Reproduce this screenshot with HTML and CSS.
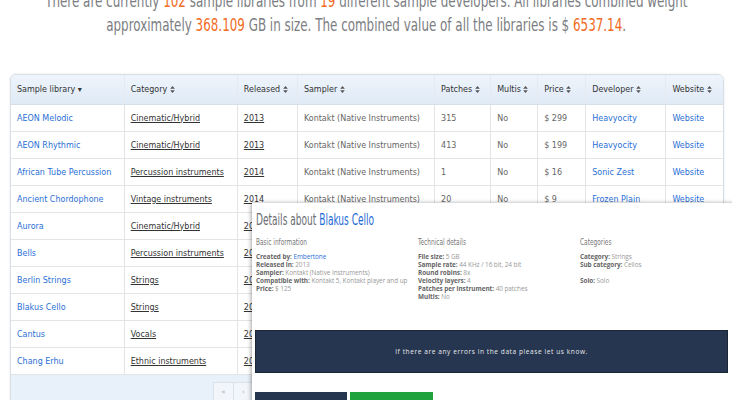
FILE: index.html
```html
<!DOCTYPE html>
<html>
<head>
<meta charset="utf-8">
<link rel="stylesheet" href="styles.css">
</head>
<body>
<div class="page">
  <div class="headline">
    <span class="hl-line">There are currently <span class="num">102</span> sample libraries from <span class="num">19</span> different sample developers. All libraries combined weight</span>
    <span class="hl-line">approximately <span class="num">368.109</span> GB in size. The combined value of all the libraries is $ <span class="num">6537.14</span>.</span>
  </div>

  <div class="tablewrap">
    <table class="libs">
      <colgroup>
        <col class="c1"><col class="c2"><col class="c3"><col class="c4"><col class="c5"><col class="c6"><col class="c7"><col class="c8"><col class="c9">
      </colgroup>
      <thead>
        <tr>
          <th>Sample library <span class="caret">&#9662;</span></th>
          <th>Category <svg class="sort" viewBox="0 0 6 9"><path d="M3 0L6 3.5H0Z M3 9L0 5.5H6Z"/></svg></th>
          <th>Released <svg class="sort" viewBox="0 0 6 9"><path d="M3 0L6 3.5H0Z M3 9L0 5.5H6Z"/></svg></th>
          <th>Sampler <svg class="sort" viewBox="0 0 6 9"><path d="M3 0L6 3.5H0Z M3 9L0 5.5H6Z"/></svg></th>
          <th>Patches <svg class="sort" viewBox="0 0 6 9"><path d="M3 0L6 3.5H0Z M3 9L0 5.5H6Z"/></svg></th>
          <th>Multis <svg class="sort" viewBox="0 0 6 9"><path d="M3 0L6 3.5H0Z M3 9L0 5.5H6Z"/></svg></th>
          <th>Price <svg class="sort" viewBox="0 0 6 9"><path d="M3 0L6 3.5H0Z M3 9L0 5.5H6Z"/></svg></th>
          <th>Developer <svg class="sort" viewBox="0 0 6 9"><path d="M3 0L6 3.5H0Z M3 9L0 5.5H6Z"/></svg></th>
          <th>Website <svg class="sort" viewBox="0 0 6 9"><path d="M3 0L6 3.5H0Z M3 9L0 5.5H6Z"/></svg></th>
        </tr>
      </thead>
      <tbody>
        <tr><td><a class="lnk">AEON Melodic</a></td><td><a class="ul">Cinematic/Hybrid</a></td><td><a class="ul">2013</a></td><td class="mut">Kontakt (Native Instruments)</td><td class="mut">315</td><td class="mut">No</td><td class="mut">$ 299</td><td><a class="lnk">Heavyocity</a></td><td><a class="lnk">Website</a></td></tr>
        <tr><td><a class="lnk">AEON Rhythmic</a></td><td><a class="ul">Cinematic/Hybrid</a></td><td><a class="ul">2013</a></td><td class="mut">Kontakt (Native Instruments)</td><td class="mut">413</td><td class="mut">No</td><td class="mut">$ 199</td><td><a class="lnk">Heavyocity</a></td><td><a class="lnk">Website</a></td></tr>
        <tr><td><a class="lnk">African Tube Percussion</a></td><td><a class="ul">Percussion instruments</a></td><td><a class="ul">2014</a></td><td class="mut">Kontakt (Native Instruments)</td><td class="mut">1</td><td class="mut">No</td><td class="mut">$ 16</td><td><a class="lnk">Sonic Zest</a></td><td><a class="lnk">Website</a></td></tr>
        <tr><td><a class="lnk">Ancient Chordophone</a></td><td><a class="ul">Vintage instruments</a></td><td><a class="ul">2014</a></td><td class="mut">Kontakt (Native Instruments)</td><td class="mut">20</td><td class="mut">No</td><td class="mut">$ 9</td><td><a class="lnk">Frozen Plain</a></td><td><a class="lnk">Website</a></td></tr>
        <tr><td><a class="lnk">Aurora</a></td><td><a class="ul">Cinematic/Hybrid</a></td><td><a class="ul">2014</a></td><td class="mut">Kontakt (Native Instruments)</td><td class="mut">12</td><td class="mut">No</td><td class="mut">$ 49</td><td><a class="lnk">Frozen Plain</a></td><td><a class="lnk">Website</a></td></tr>
        <tr><td><a class="lnk">Bells</a></td><td><a class="ul">Percussion instruments</a></td><td><a class="ul">2013</a></td><td class="mut">Kontakt (Native Instruments)</td><td class="mut">6</td><td class="mut">No</td><td class="mut">$ 29</td><td><a class="lnk">Soundiron</a></td><td><a class="lnk">Website</a></td></tr>
        <tr><td><a class="lnk">Berlin Strings</a></td><td><a class="ul">Strings</a></td><td><a class="ul">2014</a></td><td class="mut">Kontakt (Native Instruments)</td><td class="mut">100</td><td class="mut">No</td><td class="mut">$ 749</td><td><a class="lnk">Orchestral Tools</a></td><td><a class="lnk">Website</a></td></tr>
        <tr><td><a class="lnk">Blakus Cello</a></td><td><a class="ul">Strings</a></td><td><a class="ul">2013</a></td><td class="mut">Kontakt (Native Instruments)</td><td class="mut">40</td><td class="mut">No</td><td class="mut">$ 125</td><td><a class="lnk">Embertone</a></td><td><a class="lnk">Website</a></td></tr>
        <tr><td><a class="lnk">Cantus</a></td><td><a class="ul">Vocals</a></td><td><a class="ul">2013</a></td><td class="mut">Kontakt (Native Instruments)</td><td class="mut">30</td><td class="mut">No</td><td class="mut">$ 299</td><td><a class="lnk">Soundiron</a></td><td><a class="lnk">Website</a></td></tr>
        <tr><td><a class="lnk">Chang Erhu</a></td><td><a class="ul">Ethnic instruments</a></td><td><a class="ul">2014</a></td><td class="mut">Kontakt (Native Instruments)</td><td class="mut">8</td><td class="mut">No</td><td class="mut">$ 39</td><td><a class="lnk">Frozen Plain</a></td><td><a class="lnk">Website</a></td></tr>
      </tbody>
    </table>
    <div class="tfoot">
      <div class="pager">
        <span class="pg">&laquo;</span><span class="pg">&lsaquo;</span><span class="pg">1</span><span class="pg">2</span><span class="pg">3</span>
      </div>
    </div>
  </div>

  <div class="details">
    <h2 class="dtitle"><span class="cond">Details about <span class="dname">Blakus Cello</span></span></h2>
    <div class="dcols">
      <div class="dcol">
        <h3 class="dhead"><span class="cond">Basic information</span></h3>
        <p class="dline"><b>Created by:</b> <span class="dlink">Embertone</span></p>
        <p class="dline"><b>Released in:</b> 2013</p>
        <p class="dline"><b>Sampler:</b> Kontakt (Native Instruments)</p>
        <p class="dline"><b>Compatible with:</b> Kontakt 5, Kontakt player and up</p>
        <p class="dline"><b>Price:</b> $ 125</p>
      </div>
      <div class="dcol">
        <h3 class="dhead"><span class="cond">Technical details</span></h3>
        <p class="dline"><b>File size:</b> 5 GB</p>
        <p class="dline"><b>Sample rate:</b> 44 KHz / 16 bit, 24 bit</p>
        <p class="dline"><b>Round robins:</b> 8x</p>
        <p class="dline"><b>Velocity layers:</b> 4</p>
        <p class="dline"><b>Patches per instrument:</b> 40 patches</p>
        <p class="dline"><b>Multis:</b> No</p>
      </div>
      <div class="dcol">
        <h3 class="dhead"><span class="cond">Categories</span></h3>
        <p class="dline"><b>Category:</b> Strings</p>
        <p class="dline"><b>Sub category:</b> Cellos</p>
        <p class="dline blank">&nbsp;</p>
        <p class="dline"><b>Solo:</b> Solo</p>
      </div>
    </div>
    <div class="notice">If there are any errors in the data please let us know.</div>
    <div class="btns">
      <span class="btn dark">Report error</span><span class="btn green">Visit website</span>
    </div>
  </div>
</div>
</body>
</html>
```
FILE: styles.css
```css
html, body { margin: 0; padding: 0; background: #fff; }
body { width: 732px; height: 400px; overflow: hidden; }
.page { position: relative; display: flow-root; }

.headline {
  margin: -11px 0 0;
  display: flex;
  flex-direction: column;
  align-items: center;
  font-family: "DejaVu Sans Condensed", "DejaVu Sans", sans-serif;
  font-stretch: condensed;
  font-size: 18px;
  line-height: 24px;
  color: #7b7d82;
}
.hl-line {
  display: block;
  white-space: nowrap;
  transform: scaleX(0.736);
  transform-origin: 50% 50%;
}
.num { color: #f26a24; }

.tablewrap {
  margin: 37px 8px 0 10px;
  border: 1px solid #d8dee6;
  border-radius: 5px 6px 0 0;
  overflow: hidden;
  box-shadow: 0 0 3px rgba(0,0,0,0.08);
}
.libs {
  width: 714px;
  table-layout: fixed;
  border-collapse: collapse;
  font-family: "DejaVu Sans", sans-serif;
  font-size: 8px;
}
.c1 { width: 113px; } .c2 { width: 113px; } .c3 { width: 60px; } .c4 { width: 137px; }
.c5 { width: 56px; } .c6 { width: 47px; } .c7 { width: 48px; } .c8 { width: 80px; } .c9 { width: 59px; }

.libs th {
  height: 29px;
  padding: 0 6px;
  text-align: left;
  font-weight: normal;
  color: #333;
  background: linear-gradient(#eef4fb, #dfeaf6);
  border-right: 1px solid #e6e9ed;
  border-bottom: 1px solid #d9dfe6;
  white-space: nowrap;
}
.libs td {
  height: 26px;
  padding: 0 6px;
  border-right: 1px solid #e4e4e4;
  border-bottom: 1px solid #e4e4e4;
  white-space: nowrap;
  overflow: hidden;
}
.libs th:last-child, .libs td:last-child { border-right: none; }
.caret { font-size: 8px; }
.sort { width: 5px; height: 7px; fill: #555; vertical-align: -1px; }
.lnk { color: #2a6fd6; }
.ul { color: #333; text-decoration: underline; }
.mut { color: #666; }

.tfoot {
  height: 30px;
  background: #e8f0fa;
}
.pager { display: flex; padding: 7px 0 0 202px; }
.pg {
  width: 19px; height: 18px;
  border: 1px solid #dbe2ea;
  background: #f2f6fb;
  color: #aaa;
  font-family: "DejaVu Sans", sans-serif;
  font-size: 7px;
  display: flex; align-items: center; justify-content: center;
  margin-right: -1px;
}

.details {
  position: absolute;
  left: 252px;
  top: 203px;
  width: 500px;
  height: 220px;
  background: #fff;
  box-shadow: -1px 0 4px rgba(0,0,0,0.35);
  padding: 0 0 0 3px;
  box-sizing: border-box;
}
.cond { display: inline-block; white-space: nowrap; transform-origin: 0 50%; }
.dtitle {
  margin: 7px 0 0 1px;
  font-family: "DejaVu Sans Condensed", "DejaVu Sans", sans-serif;
  font-stretch: condensed;
  font-weight: normal;
  font-size: 15px;
  line-height: 20px;
  color: #6c6e72;
}
.dtitle .cond { transform: scaleX(0.67); }
.dname { color: #1e6ad6; }
.dcols { display: grid; grid-template-columns: 162px 162px 162px; margin-top: 6px; }
.dhead {
  margin: 0 0 5px 1px;
  font-family: "DejaVu Sans Condensed", "DejaVu Sans", sans-serif;
  font-stretch: condensed;
  font-weight: normal;
  font-size: 9px;
  line-height: 12px;
  color: #777;
}
.dhead .cond { transform: scaleX(0.72); }
.dline {
  margin: 0 0 0 1px;
  font-family: "Open Sans", sans-serif;
  font-size: 6.4px;
  line-height: 8px;
  letter-spacing: -0.05px;
  color: #999;
  white-space: nowrap;
}
.dline b { color: #666; font-weight: bold; }
.dlink { color: #2a6fd6; }

.notice {
  margin: 29px 0 0 0;
  width: 473px;
  height: 43px;
  box-sizing: border-box;
  background: #273650;
  border: 1px solid #1a2536;
  color: #e6e9ee;
  font-family: "Open Sans", sans-serif;
  font-size: 6.5px;
  letter-spacing: 0.6px;
  display: flex; align-items: center; justify-content: center;
}
.btns { display: flex; gap: 3px; margin-top: 19px; }
.btn {
  height: 30px;
  color: #fff;
  font-family: "Open Sans", sans-serif;
  font-size: 7px;
  display: flex; align-items: center; justify-content: center;
}
.btn.dark { width: 92px; background: #27364f; }
.btn.green { width: 83px; background: #20a33f; }
```
